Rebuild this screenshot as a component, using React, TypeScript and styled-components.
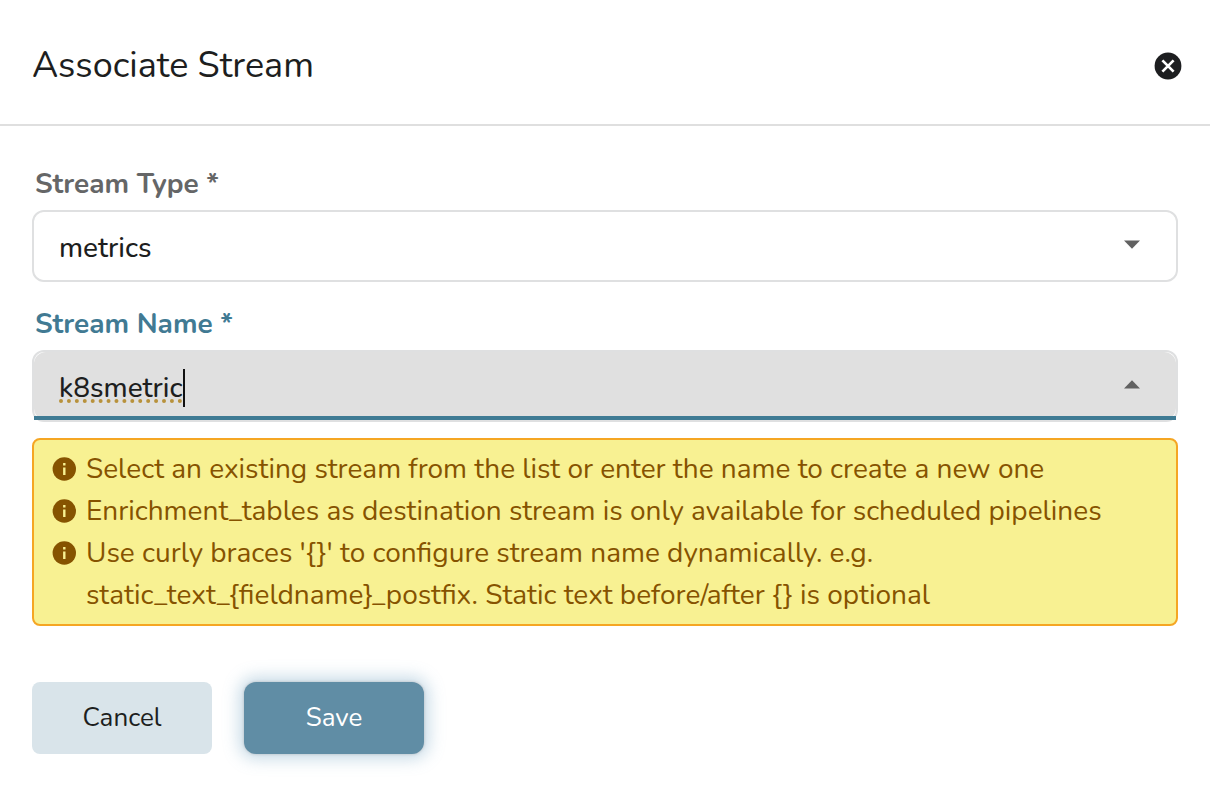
import React, { useState } from "react";
import styled, { createGlobalStyle } from "styled-components";

const GlobalStyle = createGlobalStyle`
  *, *::before, *::after { box-sizing: border-box; }
  body {
    margin: 0;
    background: #fff;
    color: #1d1e20;
    font-family: Nunito, "Nunito Sans", Lato, "Open Sans", sans-serif;
  }
  button, input, select { font: inherit; color: inherit; }
`;

const Header = styled.header`
  display: flex;
  align-items: center;
  justify-content: space-between;
  height: 126px;
  padding: 8px 28px 0 32px;
  border-bottom: 2px solid #dfdfdf;
`;

const Title = styled.h1`
  margin: 0;
  font-size: 36px;
  line-height: 48px;
  font-weight: 400;
`;

const CloseButton = styled.button`
  display: flex;
  padding: 0;
  border: 0;
  background: none;
  cursor: pointer;
`;

const Form = styled.form`
  display: flex;
  flex-direction: column;
  gap: 16px;
  padding: 32px 32px 54px;
`;

const Field = styled.div`
  display: flex;
  flex-direction: column;
`;

const Label = styled.label<{ $active?: boolean }>`
  padding: 0 3px;
  margin: 8px 0;
  font-size: 28px;
  line-height: 36px;
  font-weight: 700;
  color: ${(p) => (p.$active ? "#417a93" : "#656667")};
`;

const Control = styled.div<{ $active?: boolean }>`
  position: relative;
  isolation: isolate;
  display: flex;
  align-items: center;
  height: 72px;
  padding-left: 25px;
  border: 2px solid #dfe0e1;
  border-radius: 12px;
  background: #fff;

  &::before {
    content: "";
    position: absolute;
    z-index: -1;
    inset: 0;
    border-radius: 12px;
    background: ${(p) => (p.$active ? "#e0e0e0" : "#fff")};
  }

  &::after {
    content: "";
    display: ${(p) => (p.$active ? "block" : "none")};
    position: absolute;
    left: 0;
    right: 0;
    bottom: 0;
    height: 4px;
    background: #3f7b94;
  }
`;

const Select = styled.select`
  flex: 1;
  height: 68px;
  padding: 4px 0 0;
  border: 0;
  outline: 0;
  appearance: none;
  background: none;
  font-size: 28px;
  font-weight: 500;
`;

const NameInput = styled.input`
  field-sizing: content;
  height: 68px;
  padding: 4px 0 0;
  border: 0;
  outline: 0;
  background: none;
  font-size: 28px;
  font-weight: 500;
  caret-color: transparent;
  text-decoration: underline dotted #b8923c 4px;
  text-decoration-skip-ink: none;
  text-underline-offset: 2px;
`;

const Caret = styled.span`
  width: 2px;
  height: 38px;
  margin-top: 4px;
  background: #111;
`;

const Arrow = styled.svg`
  width: 16px;
  height: 9px;
  margin: 0 36px 4px auto;
  fill: #616161;
  pointer-events: none;
`;

const Notes = styled.ul`
  margin: 0;
  padding: 8px 18px;
  border: 2px solid #f5a623;
  border-radius: 8px;
  background: #f8f192;
  color: #865300;
  font-size: 28px;
  line-height: 42px;
  list-style: none;
`;

const Note = styled.li`
  display: flex;
  gap: 10px;
`;

const InfoMark = styled.svg`
  flex: none;
  width: 24px;
  height: 24px;
  margin-top: 9px;
`;

const Actions = styled.div`
  display: flex;
  gap: 32px;
  margin-top: 40px;
`;

const Button = styled.button<{ $primary?: boolean }>`
  width: 180px;
  height: 72px;
  padding: 0;
  border: 0;
  border-radius: ${(p) => (p.$primary ? "12px" : "8px")};
  background: ${(p) => (p.$primary ? "#608da5" : "#d9e4ea")};
  color: ${(p) => (p.$primary ? "#fff" : "#1d1e20")};
  box-shadow: ${(p) => (p.$primary ? "0 0 3px rgba(90,90,90,.3), 0 0 16px 5px rgba(96,151,185,.35)" : "none")};
  font-size: 26px;
  line-height: 36px;
  cursor: pointer;
`;

const Info = () => (
  <InfoMark viewBox="0 0 24 24" aria-hidden="true">
    <circle cx="12.3" cy="12" r="11.7" fill="#865300" />
    <rect x="11.1" y="6" width="2.4" height="2.5" fill="#f8f192" />
    <rect x="11.1" y="10.5" width="2.4" height="7.5" fill="#f8f192" />
  </InfoMark>
);

const notes = [
  "Select an existing stream from the list or enter the name to create a new one",
  "Enrichment_tables as destination stream is only available for scheduled pipelines",
  "Use curly braces '{}' to configure stream name dynamically. e.g. static_text_{fieldname}_postfix. Static text before/after {} is optional",
];

export default function App() {
  const [type, setType] = useState("metrics");
  const [name, setName] = useState("k8smetric");

  return (
    <main>
      <GlobalStyle />
      <Header>
        <Title>Associate Stream</Title>
        <CloseButton type="button" aria-label="Close">
          <svg width="28" height="28" viewBox="0 0 28 28" aria-hidden="true">
            <circle cx="14" cy="14" r="13.4" fill="#1d1e20" />
            <path d="M8.4 8.4 19.6 19.6M19.6 8.4 8.4 19.6" stroke="#fff" strokeWidth="2.7" />
          </svg>
        </CloseButton>
      </Header>
      <Form onSubmit={(e) => e.preventDefault()}>
        <Field>
          <Label htmlFor="stream-type">Stream Type *</Label>
          <Control>
            <Select id="stream-type" value={type} onChange={(e) => setType(e.target.value)}>
              <option>metrics</option>
              <option>logs</option>
              <option>traces</option>
            </Select>
            <Arrow viewBox="0 0 16 9"><path d="M0 .5h16L8 8.8z" /></Arrow>
          </Control>
        </Field>
        <Field>
          <Label $active htmlFor="stream-name">Stream Name *</Label>
          <Control $active>
            <NameInput id="stream-name" value={name} onChange={(e) => setName(e.target.value)} />
            <Caret />
            <Arrow viewBox="0 0 16 9"><path d="M0 8.5h16L8 .2z" /></Arrow>
          </Control>
        </Field>
        <Notes>
          {notes.map((text) => (
            <Note key={text}>
              <Info />
              <span>{text}</span>
            </Note>
          ))}
        </Notes>
        <Actions>
          <Button type="button">Cancel</Button>
          <Button type="submit" $primary>Save</Button>
        </Actions>
      </Form>
    </main>
  );
}
